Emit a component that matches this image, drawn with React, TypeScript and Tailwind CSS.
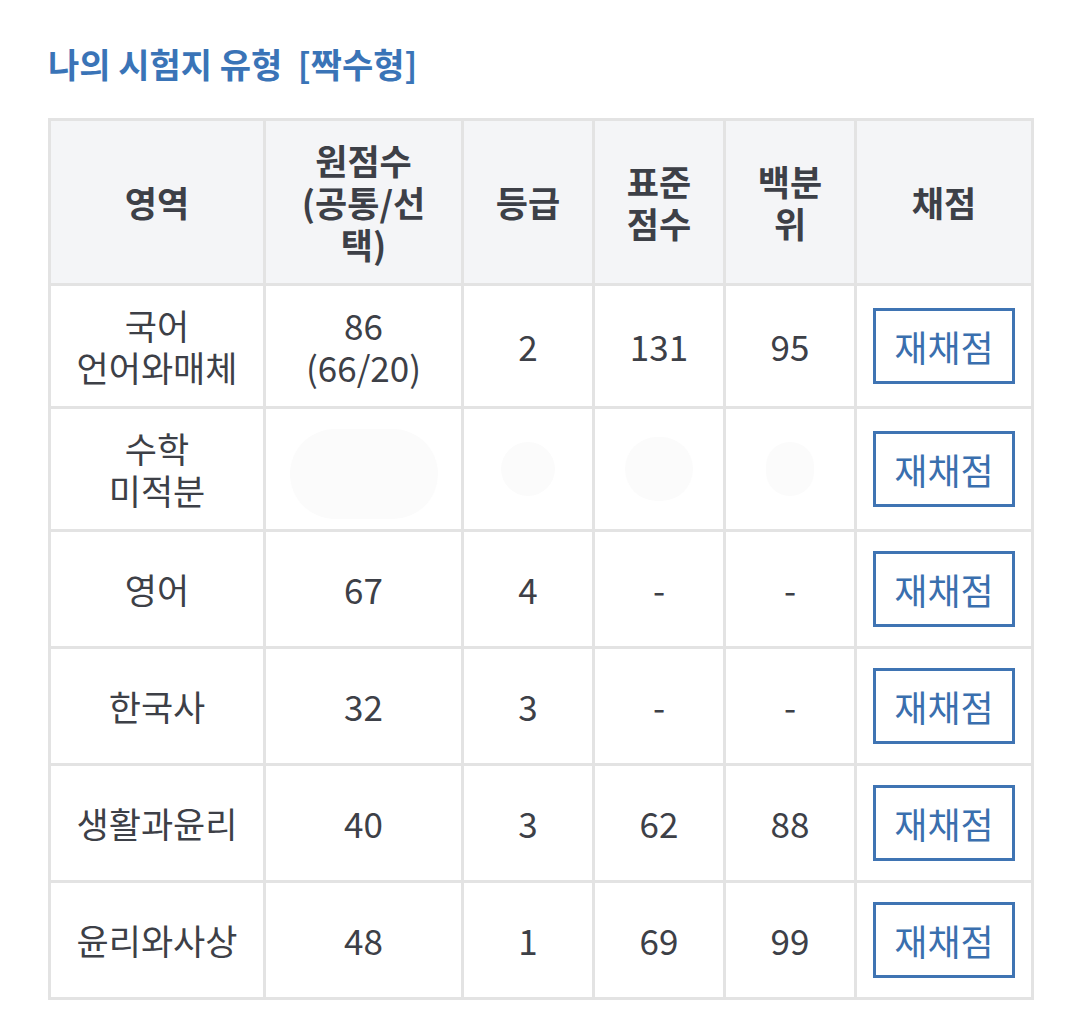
import React from 'react';

type Row = {
  area: string[];
  raw: string[];
  grade: string;
  std: string;
  pct: string;
  hidden?: boolean;
  h: string;
};

const rows: Row[] = [
  { area: ['국어', '언어와매체'], raw: ['86', '(66/20)'], grade: '2', std: '131', pct: '95', h: 'h-[123px]' },
  { area: ['수학', '미적분'], raw: [], grade: '', std: '', pct: '', hidden: true, h: 'h-[123px]' },
  { area: ['영어'], raw: ['67'], grade: '4', std: '-', pct: '-', h: 'h-[117px]' },
  { area: ['한국사'], raw: ['32'], grade: '3', std: '-', pct: '-', h: 'h-[117px]' },
  { area: ['생활과윤리'], raw: ['40'], grade: '3', std: '62', pct: '88', h: 'h-[117px]' },
  { area: ['윤리와사상'], raw: ['48'], grade: '1', std: '69', pct: '99', h: 'h-[117px]' },
];

const cell = 'border-[3px] border-[#e3e3e3] text-center align-middle p-0 whitespace-nowrap';

export default function App() {
  return (
    <div className="min-h-screen bg-white px-[48px] pt-[40px] text-[35px] leading-[42px] text-[#3d4047]"
         style={{ fontFamily: '"Noto Sans CJK KR", "Noto Sans", sans-serif' }}>
      <h1 className="text-[34px] leading-[48px] font-bold text-[#3a74b7] whitespace-pre">나의 시험지 유형  [짝수형]</h1>

      <table className="mt-[30px] w-[983px] border-collapse table-fixed">
        <colgroup>
          <col className="w-[215px]" />
          <col className="w-[198px]" />
          <col className="w-[131px]" />
          <col className="w-[131px]" />
          <col className="w-[131px]" />
          <col className="w-[177px]" />
        </colgroup>
        <thead>
          <tr className="h-[165px] bg-[#f4f5f7] font-bold">
            <th className={cell}>영역</th>
            <th className={cell}>원점수<br />(공통/선<br />택)</th>
            <th className={cell}>등급</th>
            <th className={cell}>표준<br />점수</th>
            <th className={cell}>백분<br />위</th>
            <th className={cell}>채점</th>
          </tr>
        </thead>
        <tbody>
          {rows.map((r, i) => (
            <tr key={i} className={r.h}>
              <td className={cell}>
                {r.area.map((a, j) => <div key={j}>{a}</div>)}
              </td>
              <td className={cell}>
                {r.hidden ? (
                  <div className="mx-auto mt-[10px] w-[148px] h-[90px] rounded-[45px] bg-[#fbfbfb]" />
                ) : (
                  r.raw.map((a, j) => <div key={j}>{a}</div>)
                )}
              </td>
              <td className={cell}>
                {r.hidden ? <div className="mx-auto w-[54px] h-[54px] rounded-full bg-[#fbfbfb]" /> : r.grade}
              </td>
              <td className={cell}>
                {r.hidden ? <div className="mx-auto w-[68px] h-[64px] rounded-full bg-[#fbfbfb]" /> : r.std}
              </td>
              <td className={cell}>
                {r.hidden ? <div className="mx-auto w-[48px] h-[54px] rounded-full bg-[#fbfbfb]" /> : r.pct}
              </td>
              <td className={cell}>
                <button className="mx-auto flex items-center justify-center w-[142px] h-[76px] border-[3px] border-[#3f74b3] text-[#3a6fae] text-[36px]">
                  재채점
                </button>
              </td>
            </tr>
          ))}
        </tbody>
      </table>
    </div>
  );
}
